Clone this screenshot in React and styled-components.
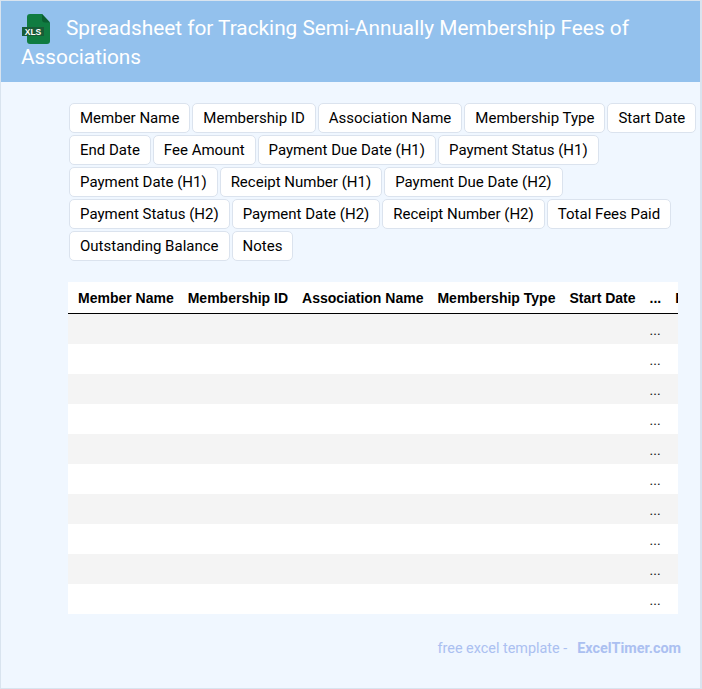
import React from 'react'
import styled, { createGlobalStyle } from 'styled-components'

const GlobalStyle = createGlobalStyle`
	html, body {
		margin: 0;
		padding: 0;
		background: #ffffff;
		font-family: 'Roboto', 'Liberation Sans', sans-serif;
	}
`

const Card = styled.div`
	box-sizing: border-box;
	width: 702px;
	height: 689px;
	background: #f0f7ff;
	border: 1px solid #d9e4ef;
	border-right-width: 2px;
	overflow: hidden;
`

const Header = styled.header`
	box-sizing: border-box;
	height: 81px;
	padding: 13px 20px 0;
	background: #93c1ed;
	color: #ffffff;
	font-size: 20.8px;
	line-height: 27px;
`

const Logo = styled.svg`
	display: inline-block;
	width: 30px;
	height: 30px;
	margin-right: 15px;
	vertical-align: -9px;
`

const Tags = styled.div`
	display: flex;
	flex-wrap: wrap;
	gap: 2px;
	margin: 21px 0 0 68px;
`

const Tag = styled.span`
	box-sizing: border-box;
	height: 30px;
	padding: 0 10px;
	background: #ffffff;
	border: 1px solid #dbe3ee;
	border-radius: 5px;
	color: #000000;
	font-size: 15px;
	line-height: 28px;
`

const TableWrap = styled.div`
	width: 610px;
	margin: 21px 0 0 67px;
	overflow: hidden;
`

const Table = styled.table`
	border-collapse: collapse;
	background: #ffffff;
	white-space: nowrap;
`

const HeadCell = styled.th`
	height: 31px;
	padding: 0 7px;
	border-bottom: 1px solid #000000;
	color: #000000;
	font: bold 14px 'Liberation Sans', Arial, sans-serif;
	text-align: left;

	&:first-child {
		padding-left: 10px;
	}
`

const Row = styled.tr`
	height: 30px;
	background: ${({ $shaded }) => ($shaded ? '#f4f4f4' : '#ffffff')};
`

const Cell = styled.td`
	padding: 3px 7px 0;
	color: #111111;
	font-size: 14px;
`

const Footer = styled.footer`
	display: flex;
	justify-content: flex-end;
	gap: 10px;
	margin: 25px 19px 0 0;
	color: #abc0f1;
	font-size: 14.4px;
	line-height: 20px;
`

const Brand = styled.strong`
	font-weight: 700;
`

const fields = [
	'Member Name',
	'Membership ID',
	'Association Name',
	'Membership Type',
	'Start Date',
	'End Date',
	'Fee Amount',
	'Payment Due Date (H1)',
	'Payment Status (H1)',
	'Payment Date (H1)',
	'Receipt Number (H1)',
	'Payment Due Date (H2)',
	'Payment Status (H2)',
	'Payment Date (H2)',
	'Receipt Number (H2)',
	'Total Fees Paid',
	'Outstanding Balance',
	'Notes',
]

const columns = [...fields.slice(0, 5), '...', 'End Date']
const rows = Array.from({ length: 10 }, (_, i) => i)

const App = () => (
	<>
		<GlobalStyle />
		<Card>
			<Header>
				<Logo viewBox="0 0 30 30" aria-hidden="true">
					<path d="M6 3a3 3 0 0 1 3-3h12l8 8.5V27a3 3 0 0 1-3 3H9a3 3 0 0 1-3-3z" fill="#107c41" />
					<path d="M21 0l8 8.5h-5a3 3 0 0 1-3-3z" fill="#0b5f31" />
					<rect x="1" y="13" width="22" height="9" fill="#185c37" />
					<text x="12" y="20.8" fill="#ffffff" fontSize="8.5" fontWeight="bold" fontFamily="Liberation Sans" textAnchor="middle">XLS</text>
				</Logo>
				Spreadsheet for Tracking Semi-Annually Membership Fees of Associations
			</Header>
			<Tags>
				{fields.map((field) => (
					<Tag key={field}>{field}</Tag>
				))}
			</Tags>
			<TableWrap>
				<Table>
					<thead>
						<tr>
							{columns.map((col) => (
								<HeadCell key={col}>{col}</HeadCell>
							))}
						</tr>
					</thead>
					<tbody>
						{rows.map((row) => (
							<Row key={row} $shaded={row % 2 === 0}>
								{columns.map((col) => (
									<Cell key={col}>{col === '...' ? '...' : ''}</Cell>
								))}
							</Row>
						))}
					</tbody>
				</Table>
			</TableWrap>
			<Footer>
				<span>free excel template -</span>
				<Brand>ExcelTimer.com</Brand>
			</Footer>
		</Card>
	</>
)

export default App
